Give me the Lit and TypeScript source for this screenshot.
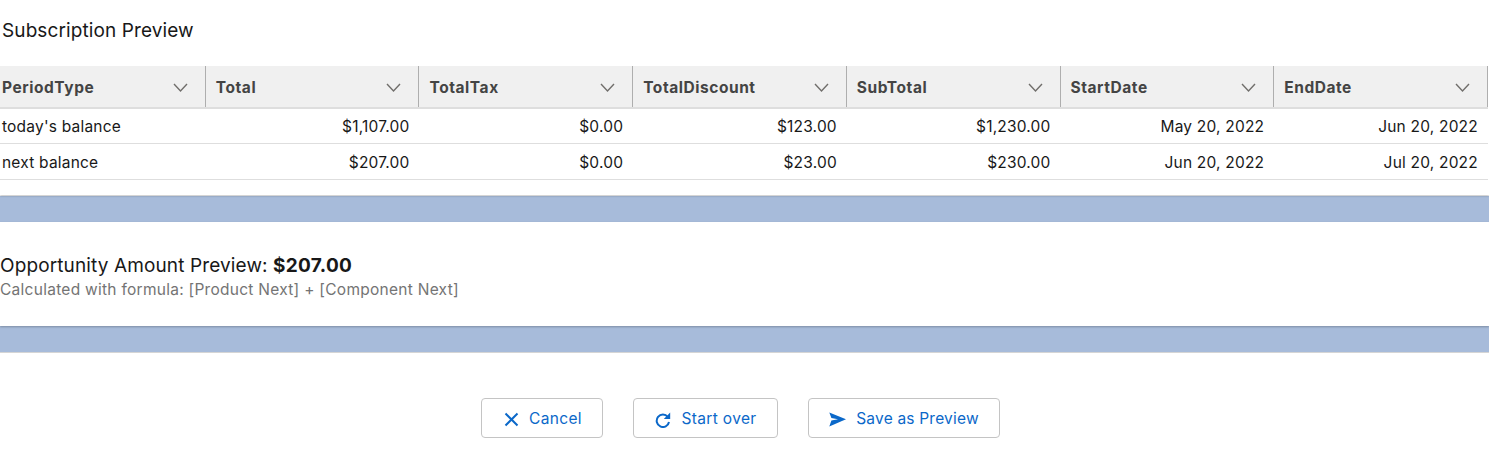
import { LitElement, html, css, svg } from "lit";
import { customElement } from "lit/decorators.js";

const columns = ["PeriodType", "Total", "TotalTax", "TotalDiscount", "SubTotal", "StartDate", "EndDate"];
const rows = [
  ["today's balance", "$1,107.00", "$0.00", "$123.00", "$1,230.00", "May 20, 2022", "Jun 20, 2022"],
  ["next balance", "$207.00", "$0.00", "$23.00", "$230.00", "Jun 20, 2022", "Jul 20, 2022"],
];

const chevron = svg`<path d="M1 1 L7.5 8 L14 1" fill="none" stroke="#706e6b" stroke-width="1.4"/>`;
const xIcon = svg`<path d="M1.5 1.5 L13.5 13.5 M13.5 1.5 L1.5 13.5" fill="none" stroke="#0b68c9" stroke-width="2"/>`;
const redo = svg`<path d="M12.8 6 A6.2 6.2 0 1 0 14 11" fill="none" stroke="#0b68c9" stroke-width="2"/><path d="M15.2 1.5 V8 H8.8 Z" fill="#0b68c9"/>`;
const send = svg`<path d="M0.3 0.5 L17 7.3 L0.3 14.5 L2.4 8.6 L9 7.3 L2.4 6 Z" fill="#0b68c9"/>`;

@customElement("app-root")
export class AppRoot extends LitElement {
  static styles = css`
    :host {
      display: block;
      width: 1489px;
      height: 449px;
      overflow: hidden;
      background: #fff;
      font-family: Inter, "Liberation Sans", sans-serif;
      color: #181818;
      font-size: 15.5px;
      letter-spacing: 0.2px;
    }
    .card {
      background: #fff;
      box-shadow: 0 1px 2px rgba(0, 0, 0, 0.25);
      position: relative;
    }
    .top {
      height: 195px;
      padding-top: 19px;
      box-sizing: border-box;
    }
    .title {
      font-size: 19px;
      line-height: 23px;
      padding-left: 2px;
      height: 47px;
      letter-spacing: 0.1px;
    }
    .grid {
      display: grid;
      grid-template-columns: 205.8px repeat(6, 213.7px);
      grid-template-rows: 41px 2px 34px 1px 35px 1px;
      width: 1488px;
    }
    .head {
      display: flex;
      align-items: center;
      justify-content: space-between;
      background: #f0f0f0;
      box-sizing: border-box;
      font-weight: 700;
      color: #444;
      letter-spacing: 0.55px;
      padding: 2px 17px 0 10px;
      border-right: 1px solid #aeaeae;
    }
    .head:first-child { padding-left: 2px; }
    .line {
      grid-column: 1 / -1;
      background: #dedede;
    }
    .cell {
      text-align: right;
      padding-right: 10px;
      white-space: nowrap;
    }
    .cell.r0 { line-height: 36px; }
    .cell.r1 { line-height: 38px; }
    .cell.first { text-align: left; padding-left: 2px; }
    .chev { width: 15px; height: 10px; display: block; }
    .band { height: 26px; background: #a7bbda; }
    .band.a { margin-top: 1px; }
    .middle {
      height: 104px;
      box-sizing: border-box;
      padding-top: 32px;
    }
    .amount { font-size: 19px; line-height: 23px; letter-spacing: 0.12px; }
    .amount b { font-weight: 700; letter-spacing: 0.3px; }
    .note { line-height: 18px; color: #747474; margin-top: 4px; letter-spacing: 0.27px; }
    .rule { height: 1px; background: #d5d5d5; }
    .actions {
      display: flex;
      gap: 30px;
      padding: 45px 0 0 481px;
    }
    .btn {
      height: 40px;
      box-sizing: border-box;
      border: 1px solid #c4c4c4;
      border-radius: 4px;
      background: #fff;
      display: flex;
      align-items: center;
      justify-content: center;
      gap: 10px;
      font: inherit;
      letter-spacing: inherit;
      color: #0b68c9;
      padding: 0;
    }
    .btn svg { display: block; margin-top: 3px; }
    .cancel { width: 122px; padding-left: 2px; letter-spacing: 0.35px; }
    .start { width: 145px; padding-left: 1px; letter-spacing: 0.35px; }
    .save { width: 192px; }
  `;

  render() {
    return html`
      <div class="card top">
        <div class="title">Subscription Preview</div>
        <div class="grid">
          ${columns.map(
            (c) => html`<div class="head"><span>${c}</span>
              <svg class="chev" viewBox="0 0 15 10">${chevron}</svg></div>`
          )}
          <div class="line"></div>
          ${rows.map(
            (r, ri) => html`
              ${r.map((v, i) => html`<div class="cell r${ri} ${i === 0 ? "first" : ""}">${v}</div>`)}
              <div class="line"></div>
            `
          )}
        </div>
      </div>
      <div class="band a"></div>
      <div class="card middle">
        <div class="amount">Opportunity Amount Preview: <b>$207.00</b></div>
        <div class="note">Calculated with formula: [Product Next] + [Component Next]</div>
      </div>
      <div class="band"></div>
      <div class="rule"></div>
      <div class="actions">
        <button class="btn cancel"><svg width="15" height="15" viewBox="0 0 15 15">${xIcon}</svg>Cancel</button>
        <button class="btn start"><svg width="16" height="17" viewBox="0 0 16 17">${redo}</svg>Start over</button>
        <button class="btn save"><svg width="17" height="15" viewBox="0 0 17 15">${send}</svg>Save as Preview</button>
      </div>
    `;
  }
}
